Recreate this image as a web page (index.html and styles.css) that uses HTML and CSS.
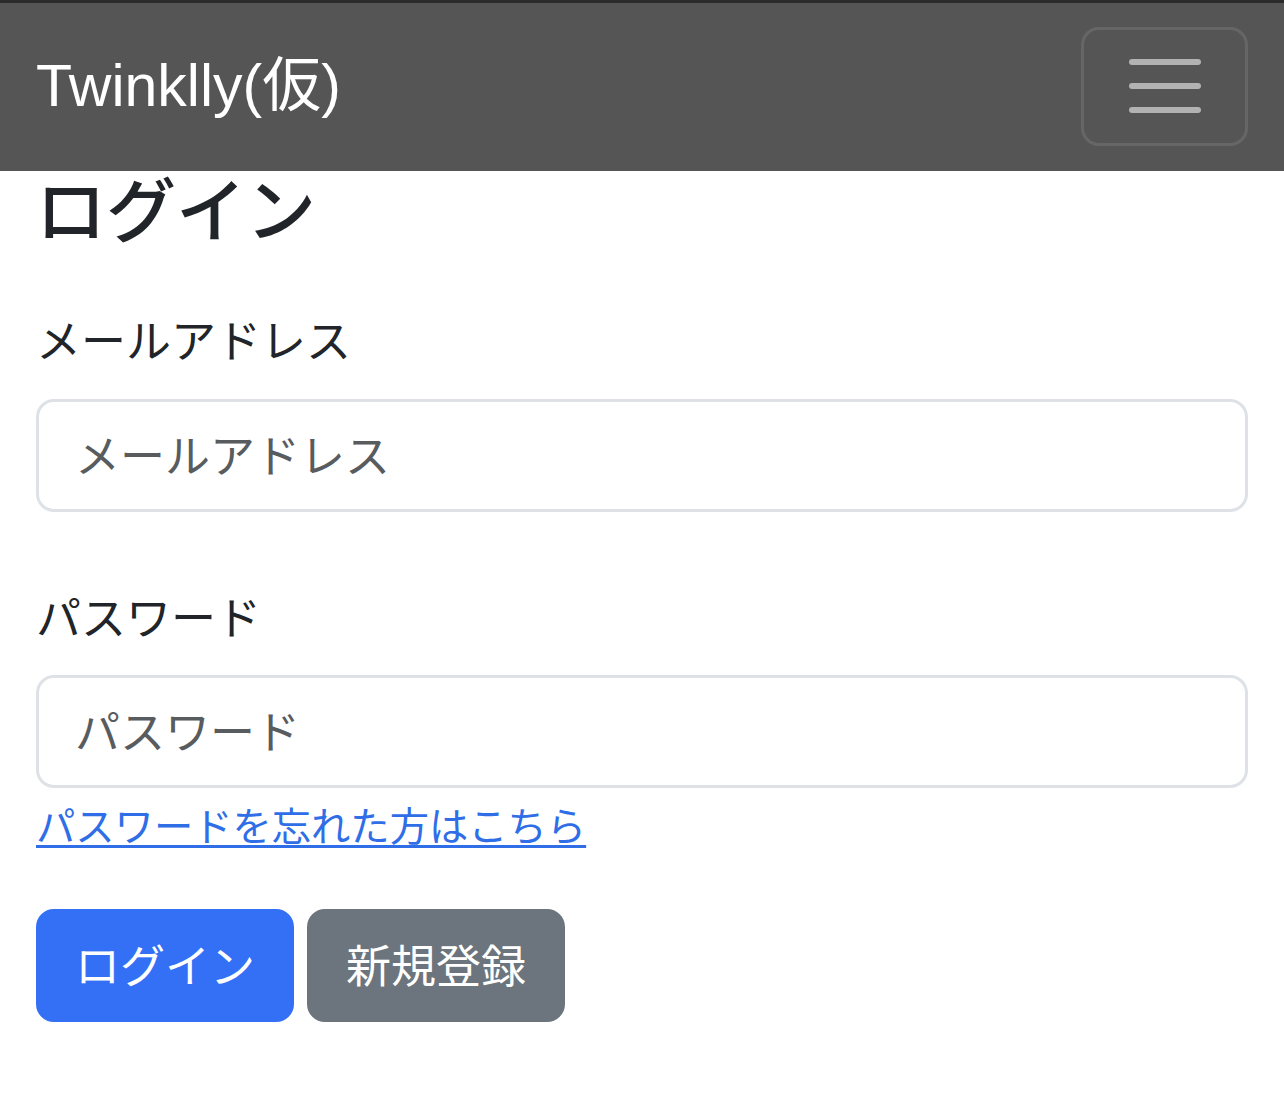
FILE: index.html
```html
<!DOCTYPE html>
<html lang="ja">
<head>
<meta charset="utf-8">
<title>ログイン</title>
<link rel="stylesheet" href="styles.css">
</head>
<body>
<header class="topbar">
  <nav class="navbar">
    <a class="brand" href="#">Twinklly(仮)</a>
    <button class="toggler" type="button" aria-label="menu">
      <svg class="toggler-icon" viewBox="0 0 30 30" width="90" height="90">
        <path d="M4 7h22M4 15h22M4 23h22" stroke="rgba(255,255,255,0.55)" stroke-width="2" stroke-linecap="round" fill="none"/>
      </svg>
    </button>
  </nav>
</header>
<main class="container">
  <h2 class="title">ログイン</h2>
  <form class="login-form">
    <div class="field field-email">
      <label class="label" for="email">メールアドレス</label>
      <input class="input" id="email" type="email" placeholder="メールアドレス">
    </div>
    <div class="field field-password">
      <label class="label" for="password">パスワード</label>
      <input class="input" id="password" type="password" placeholder="パスワード">
    </div>
    <a class="forgot" href="#">パスワードを忘れた方はこちら</a>
    <div class="actions">
      <button class="btn btn-primary" type="button">ログイン</button>
      <button class="btn btn-secondary" type="button">新規登録</button>
    </div>
  </form>
</main>
</body>
</html>
```

FILE: styles.css
```css
html, body {
  margin: 0;
  padding: 0;
  background: #ffffff;
}

body {
  font-family: "Liberation Sans", "Noto Sans CJK JP", sans-serif;
  color: #212529;
  font-size: 45px;
  line-height: 1.5;
}

.topbar {
  border-top: 3px solid #2b2b2b;
  background: #555555;
}

.navbar {
  height: 168px;
  box-sizing: border-box;
  padding: 0 36px;
  display: flex;
  align-items: center;
  justify-content: space-between;
}

.brand {
  color: #ffffff;
  text-decoration: none;
  font-size: 59px;
  line-height: 1;
  margin-top: -2px;
}

.toggler {
  width: 167px;
  height: 119px;
  box-sizing: border-box;
  border: 3px solid rgba(255, 255, 255, 0.1);
  border-radius: 18px;
  background: transparent;
  padding: 0;
  display: flex;
  align-items: center;
  justify-content: center;
  margin-top: -2px;
}

.toggler-icon {
  display: block;
}

.container {
  padding: 0 36px;
}

.title {
  font-size: 70px;
  font-weight: 500;
  line-height: 1.2;
  margin: 0 0 54px;
}

.field {
  display: flex;
  flex-direction: column;
}

.field-password {
  margin-top: 74px;
}

.label {
  display: block;
  margin-bottom: 22px;
}

.input {
  height: 113px;
  box-sizing: border-box;
  border: 3px solid #dee2e6;
  border-radius: 18px;
  padding: 5px 36px 0;
  font: inherit;
  color: #212529;
  background: #ffffff;
}

.input::placeholder {
  color: #595c5f;
  opacity: 1;
}

.forgot {
  display: inline-block;
  color: #2f6ee6;
  font-size: 39.3px;
  line-height: 1.5;
  margin-top: 10px;
  text-decoration: underline;
  text-decoration-thickness: 3px;
  text-underline-offset: 4px;
}

.actions {
  display: flex;
  gap: 13px;
  margin-top: 49px;
}

.btn {
  height: 113px;
  box-sizing: border-box;
  border: 3px solid transparent;
  border-radius: 18px;
  padding: 5px 36px 0;
  font: inherit;
  color: #ffffff;
  cursor: pointer;
}

.btn-primary {
  background: #3370f5;
  border-color: #3370f5;
}

.btn-secondary {
  background: #6c757d;
  border-color: #6c757d;
}
```
